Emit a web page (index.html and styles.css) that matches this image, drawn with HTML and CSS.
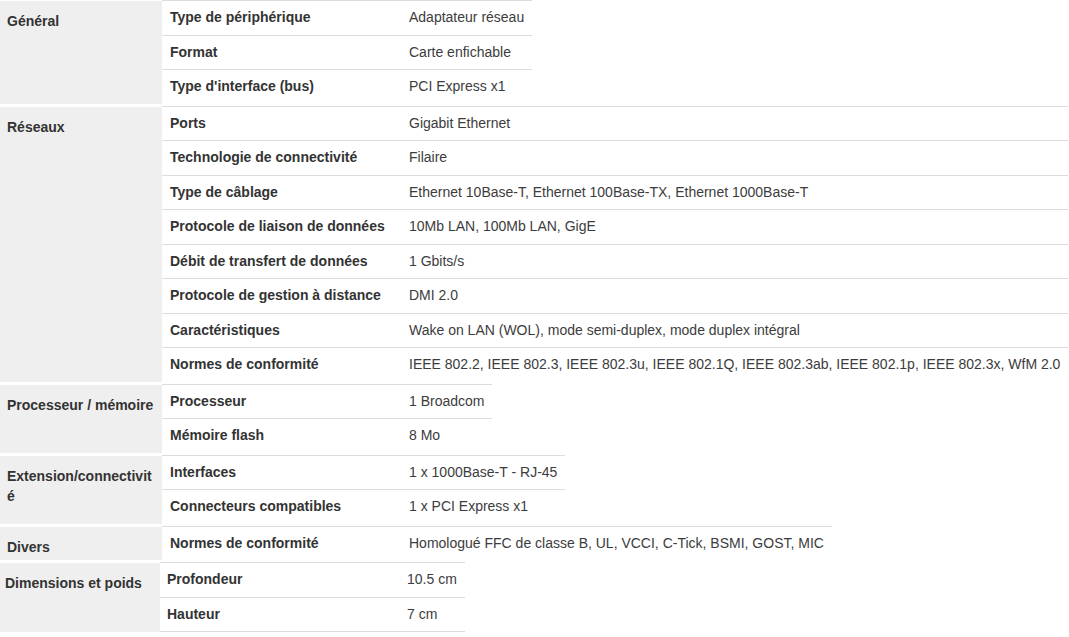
FILE: index.html
```html
<!DOCTYPE html>
<html lang="fr">
<head>
<meta charset="utf-8">
<title>Caractéristiques</title>
<link rel="stylesheet" href="styles.css">
</head>
<body>
<div class="specs">
  <table class="spec">
    <tr><th rowspan="3" class="group">Général</th><td class="label first">Type de périphérique</td><td class="value first">Adaptateur réseau</td></tr>
    <tr><td class="label">Format</td><td class="value">Carte enfichable</td></tr>
    <tr><td class="label">Type d'interface (bus)</td><td class="value">PCI Express x1</td></tr>
  </table>
  <table class="spec">
    <tr><th rowspan="8" class="group">Réseaux</th><td class="label first">Ports</td><td class="value first">Gigabit Ethernet</td></tr>
    <tr><td class="label">Technologie de connectivité</td><td class="value">Filaire</td></tr>
    <tr><td class="label">Type de câblage</td><td class="value">Ethernet 10Base-T, Ethernet 100Base-TX, Ethernet 1000Base-T</td></tr>
    <tr><td class="label">Protocole de liaison de données</td><td class="value">10Mb LAN, 100Mb LAN, GigE</td></tr>
    <tr><td class="label">Débit de transfert de données</td><td class="value">1 Gbits/s</td></tr>
    <tr><td class="label">Protocole de gestion à distance</td><td class="value">DMI 2.0</td></tr>
    <tr><td class="label">Caractéristiques</td><td class="value">Wake on LAN (WOL), mode semi-duplex, mode duplex intégral</td></tr>
    <tr><td class="label">Normes de conformité</td><td class="value">IEEE 802.2, IEEE 802.3, IEEE 802.3u, IEEE 802.1Q, IEEE 802.3ab, IEEE 802.1p, IEEE 802.3x, WfM 2.0</td></tr>
  </table>
  <table class="spec">
    <tr><th rowspan="2" class="group">Processeur / mémoire</th><td class="label first">Processeur</td><td class="value first">1 Broadcom</td></tr>
    <tr><td class="label">Mémoire flash</td><td class="value">8 Mo</td></tr>
  </table>
  <table class="spec">
    <tr><th rowspan="2" class="group">Extension/connectivité</th><td class="label first">Interfaces</td><td class="value first">1 x 1000Base-T - RJ-45</td></tr>
    <tr><td class="label">Connecteurs compatibles</td><td class="value">1 x PCI Express x1</td></tr>
  </table>
  <table class="spec">
    <tr><th rowspan="1" class="group">Divers</th><td class="label first">Normes de conformité</td><td class="value first">Homologué FFC de classe B, UL, VCCI, C-Tick, BSMI, GOST, MIC</td></tr>
  </table>
  <table class="spec spec-narrow">
    <tr><th rowspan="2" class="group">Dimensions et poids</th><td class="label first">Profondeur</td><td class="value first">10.5 cm</td></tr>
    <tr><td class="label">Hauteur</td><td class="value">7 cm</td></tr>
    <tr><td class="spacer"></td><td class="label end"></td><td class="value end"></td></tr>
  </table>
</div>
</body>
</html>
```
FILE: styles.css
```css
html, body {
  margin: 0;
  padding: 0;
  background: #ffffff;
}

body {
  font-family: "Liberation Sans", Arial, sans-serif;
  font-size: 14px;
  color: #333333;
}

.specs {
  display: flex;
  flex-direction: column;
  align-items: flex-start;
  gap: 2px;
}

.spec {
  border-collapse: collapse;
  border-spacing: 0;
}

.group {
  width: 148px;
  padding: 10px 7px 0 7px;
  background: #efefef;
  text-align: left;
  vertical-align: top;
  font-weight: bold;
  line-height: 20px;
  color: #333333;
  word-break: break-all;
  border-top: 1px solid #ffffff;
}

.label {
  width: 223px;
  padding: 8px;
  font-weight: bold;
  line-height: 17.5px;
  color: #333333;
  border-top: 1px solid #dddddd;
  white-space: nowrap;
  vertical-align: top;
}

.value {
  padding: 8px;
  line-height: 17.5px;
  color: #3c3c3c;
  border-top: 1px solid #dddddd;
  white-space: nowrap;
  vertical-align: top;
}

.first {
  border-top: 1px solid #dddddd;
}

.spec-narrow .group {
  width: 148px;
  padding-left: 5px;
  padding-right: 7px;
}

.spec-narrow .label {
  padding-left: 7px;
}

.spec-narrow .value {
  padding-left: 9px;
}

.spacer, .end {
  padding: 0;
  height: 0;
  line-height: 0;
}

.spacer {
  background: #efefef;
}
```
